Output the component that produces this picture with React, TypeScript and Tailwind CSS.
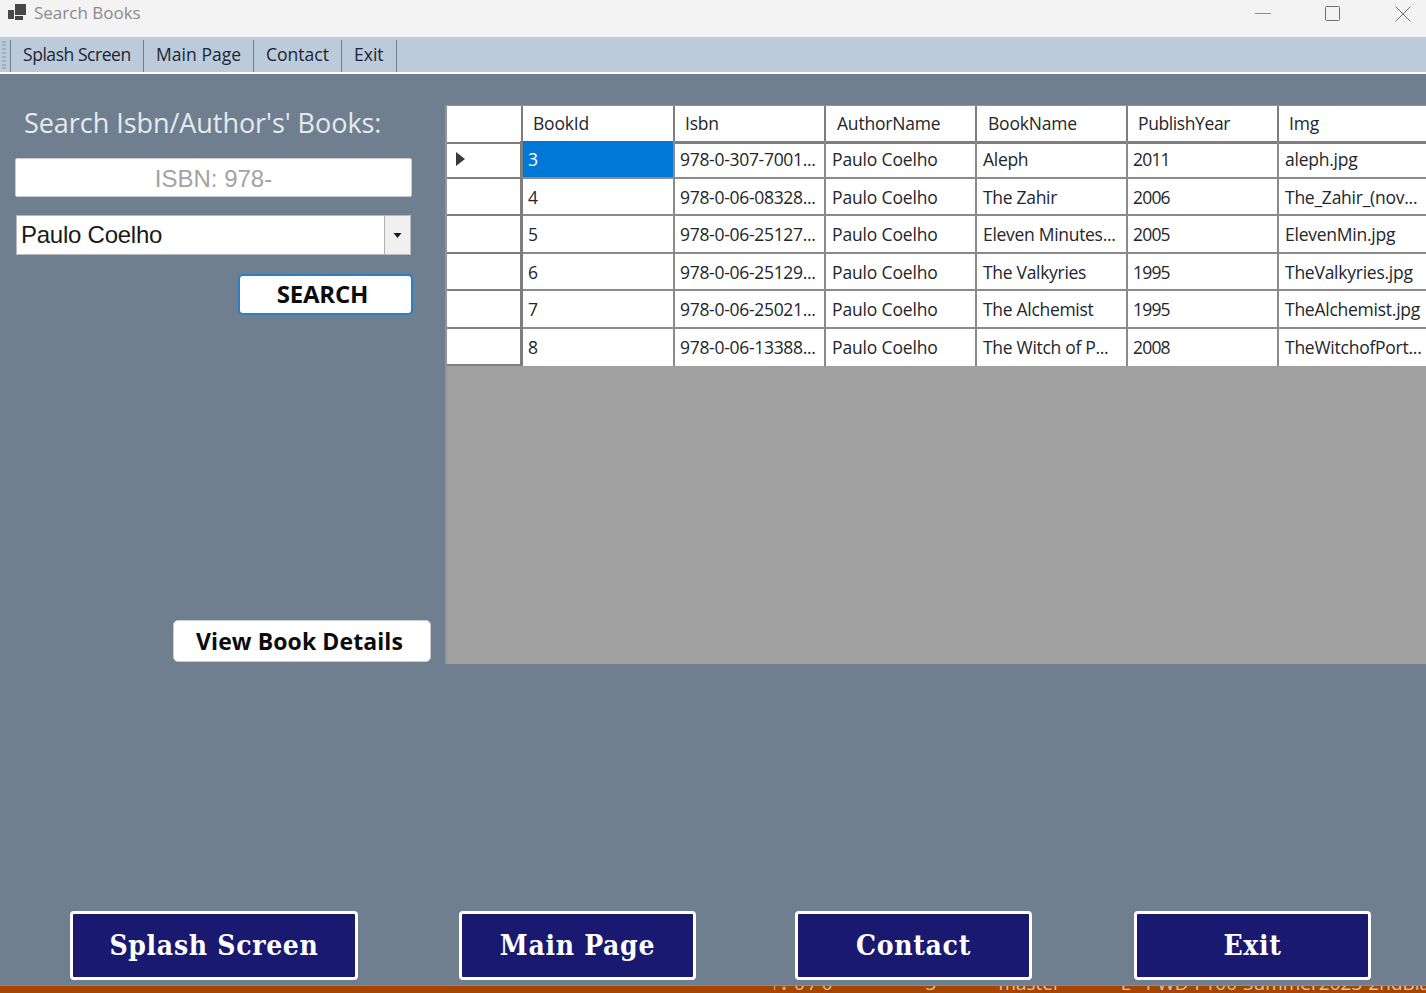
const columns = ["BookId", "Isbn", "AuthorName", "BookName", "PublishYear", "Img"];

const books = [
	["3", "978-0-307-7001...", "Paulo Coelho", "Aleph", "2011", "aleph.jpg"],
	["4", "978-0-06-08328...", "Paulo Coelho", "The Zahir", "2006", "The_Zahir_(nov..."],
	["5", "978-0-06-25127...", "Paulo Coelho", "Eleven Minutes...", "2005", "ElevenMin.jpg"],
	["6", "978-0-06-25129...", "Paulo Coelho", "The Valkyries", "1995", "TheValkyries.jpg"],
	["7", "978-0-06-25021...", "Paulo Coelho", "The Alchemist", "1995", "TheAlchemist.jpg"],
	["8", "978-0-06-13388...", "Paulo Coelho", "The Witch of P...", "2008", "TheWitchofPort..."],
];

const menuItems = [
	{ label: "Splash Screen", width: "w-[133px]", tracking: "tracking-[-0.45px]" },
	{ label: "Main Page", width: "w-[110px]", tracking: "tracking-[0.05px]" },
	{ label: "Contact", width: "w-[88px]", tracking: "tracking-[0px]" },
	{ label: "Exit", width: "w-[55px]", tracking: "tracking-[0px]" },
];

const headerClasses = [
	"pl-[10px] tracking-[-0.2px]",
	"pl-[10px] tracking-[-0.2px]",
	"pl-[11px] tracking-[-0.2px]",
	"pl-[11px] tracking-[-0.2px]",
	"pl-[10px] tracking-[-0.4px]",
	"pl-[10px] tracking-[-0.2px]",
];

const cellClasses = [
	"pl-[5px] tracking-[-0.15px]",
	"pl-[5px] tracking-[-0.3px]",
	"pl-[6px] tracking-[-0.15px]",
	"pl-[6px] tracking-[-0.3px]",
	"pl-[5px] tracking-[-0.8px]",
	"pl-[6px] tracking-[-0.25px]",
];

const TitleBar = () => {
	return (
		<div className="h-[37px] bg-[#f3f3f3] flex items-start shrink-0">
			<svg width="20" height="18" viewBox="0 0 20 18" className="ml-[7px] mt-[3px]" fill="#474747">
				<rect x="1" y="7" width="6" height="9" />
				<rect x="8" y="1" width="11" height="11" />
				<rect x="8" y="13" width="8" height="4" />
			</svg>
			<span className="ml-[7px] text-[17px] leading-[26px] text-[#8a8a8a] font-['Open_Sans',sans-serif]">Search Books</span>
			<div className="ml-auto flex items-center mt-[6px]">
				<svg width="16" height="16" viewBox="0 0 16 16" className="mr-[53px]" stroke="#8a8a8a" fill="none">
					<path d="M0 7.5H16" />
				</svg>
				<svg width="16" height="16" viewBox="0 0 16 16" className="mr-[55px]" stroke="#6f6f6f" fill="none">
					<rect x="1.5" y="0.5" width="14" height="14" rx="1" />
				</svg>
				<svg width="16" height="16" viewBox="0 0 16 16" className="mr-[15px]" stroke="#6f6f6f" fill="none">
					<path d="M0.5 0.5L15.5 15.5M15.5 0.5L0.5 15.5" />
				</svg>
			</div>
		</div>
	);
};

const MenuBar = () => {
	return (
		<div className="h-[37px] shrink-0 border-b-[2px] border-white bg-[#bccbdb] flex pl-[2px] pt-[3px] font-['Open_Sans',sans-serif]">
			<div className="w-[4px] h-[28px] mt-[1px] border-x-[2px] border-dotted border-[#9fb0c1]"></div>
			<div className="ml-[4px] h-[32px] border-l-[1.5px] border-[#6f7f8f]"></div>
			{menuItems.map((item) => (
				<div key={item.label} className={`${item.width} h-[32px] border-r-[1.5px] border-[#6f7f8f] flex items-center pl-[12px] pb-[3px] text-[17.5px] text-[#1c2530]`}>
					<span className={item.tracking}>{item.label}</span>
				</div>
			))}
		</div>
	);
};

const SearchPanel = () => {
	return (
		<div className="w-[445px] shrink-0 h-[590px] flex flex-col pl-[15px] pt-[30px]">
			<div className="ml-[9px] text-[27px] leading-[38px] text-[#e6eaee] font-['Open_Sans',sans-serif] tracking-[-0.05px]">Search Isbn/Author's' Books:</div>
			<div className="mt-[16px] w-[397px] h-[39px] rounded-[2px] bg-white border border-[#c8ccd0] flex items-center justify-center text-[24px] pt-[2px] text-[#a3a3a3] font-['Liberation_Sans',sans-serif]">
				ISBN: 978-
			</div>
			<div className="mt-[18px] ml-[1px] w-[395px] h-[40px] bg-white border border-[#b8bcc0] flex text-[24px] text-[#1a1a1a] font-['Liberation_Sans',sans-serif]">
				<span className="flex-1 pl-[4px] leading-[38px] tracking-[-0.25px]">Paulo Coelho</span>
				<div className="w-[26px] bg-[#f0f0f0] border-l border-[#b0b0b0] flex items-center justify-center">
					<svg width="9" height="5" viewBox="0 0 9 5" fill="#1a1a1a">
						<path d="M0.5 0H8.5L4.5 5Z" />
					</svg>
				</div>
			</div>
			<div className="mt-[19px] ml-[223px] w-[175px] h-[41px] rounded-[5px] bg-white border-[2px] border-[#2b80c5] flex items-center justify-center text-[24px] font-bold text-[#0c0c0c] font-['Open_Sans',sans-serif] tracking-[-0.2px] pr-[6px] pb-[2px]">
				SEARCH
			</div>
			<div className="mt-auto mb-[2px] ml-[158px] w-[258px] h-[42px] rounded-[5px] bg-white border border-[#c8ccd0] flex items-center justify-center text-[23px] font-bold text-[#0c0c0c] font-['Open_Sans',sans-serif] tracking-[0.1px] pr-[5px]">
				View Book Details
			</div>
		</div>
	);
};

const BooksGrid = () => {
	return (
		<div className="flex-1 mt-[31px] h-[559px] bg-[#a0a0a0] overflow-hidden border-l-[2px] border-t-[1px] border-[#8f9499] font-['Open_Sans',sans-serif] text-[17.5px] text-[#23262b]">
			<div className="grid grid-cols-[76px_152px_151px_151px_151px_151px_160px] h-[35px] bg-white">
				<div className="border-r-[2px] border-b-[2px] border-[#7e7e7e]"></div>
				{columns.map((name, i) => (
					<div key={name} className={`${i === 5 ? "" : "border-r-[2px]"} border-b-[3px] border-[#7e7e7e] ${headerClasses[i]} leading-[35px] whitespace-nowrap`}>
						{name}
					</div>
				))}
			</div>
			{books.map((row, r) => (
				<div key={row[0]} className={`grid grid-cols-[76px_152px_151px_151px_151px_151px_160px] ${r === 5 ? "h-[37px]" : "h-[37.5px]"} bg-white`}>
					<div className="border-r-[3px] border-b-[2px] border-[#7e7e7e] flex items-center pl-[9px]">
						{r === 0 && (
							<svg width="9" height="14" viewBox="0 0 9 14" className="mt-[1px]" fill="#3a3a3a">
								<path d="M0 0L9 7L0 14Z" />
							</svg>
						)}
					</div>
					{row.map((cell, c) => (
						<div
							key={c}
							className={`${c === 5 ? "" : "border-r-[2px]"} ${r === 5 ? "" : "border-b-[2px]"} border-[#8a8a8a] ${cellClasses[c]} leading-[37px] whitespace-nowrap overflow-hidden ${r === 0 && c === 0 ? "bg-[#0078d7] text-white" : ""}`}
						>
							{cell}
						</div>
					))}
				</div>
			))}
		</div>
	);
};

const FooterButton = ({ label, className }: { label: string; className: string }) => {
	return (
		<div className={`${className} h-[69px] rounded-[4px] bg-[#191970] border-[3px] border-white flex items-center justify-center text-[28px] tracking-[0.7px] font-bold text-white [font-stretch:condensed] font-['DejaVu_Serif',serif]`}>
			{label}
		</div>
	);
};

// what shows of the IDE status bar behind the window, only the bottom of its text
const StatusStrip = () => {
	return (
		<div className="h-[8px] shrink-0 bg-[#a64500] border-t border-[#9a8a7a] overflow-hidden">
			<div className="flex items-center -mt-[12px] h-[18px] text-[19px] leading-[18px] text-[#d9c3b2] whitespace-nowrap font-['Open_Sans',sans-serif]">
				<span className="ml-[770px]">↑↓ 0 / 0</span>
				<svg width="10" height="18" viewBox="0 0 10 18" className="ml-[68px]" fill="#e6d8cc">
					<path d="M9 12L2 18L1 15Z" />
				</svg>
				<span className="ml-[25px]">3</span>
				<svg width="8" height="18" viewBox="0 0 8 18" className="ml-[31px]" fill="none" stroke="#e6d8cc" strokeWidth="1.5">
					<circle cx="4" cy="15" r="3" />
				</svg>
				<span className="ml-[31px]">master</span>
				<span className="ml-[60px]">L</span>
				<svg width="12" height="18" viewBox="0 0 12 18" fill="#e6d8cc">
					<circle cx="6" cy="14" r="5.5" />
					<path d="M3.5 12H8.5L6 16Z" fill="#2a2a2a" />
				</svg>
				<span className="ml-[15px]">PWD-F100-Summer2023-2ndBlank</span>
			</div>
		</div>
	);
};

const App = () => {
	return (
		<div className="w-[1426px] h-[993px] overflow-hidden flex flex-col bg-[#6f7f8f]">
			<TitleBar />
			<MenuBar />
			<div className="flex flex-1 min-h-0 items-start">
				<SearchPanel />
				<BooksGrid />
			</div>
			<div className="flex shrink-0 pl-[70px] mb-[5px]">
				<FooterButton label="Splash Screen" className="w-[288px]" />
				<FooterButton label="Main Page" className="w-[237px] ml-[101px]" />
				<FooterButton label="Contact" className="w-[237px] ml-[99px]" />
				<FooterButton label="Exit" className="w-[237px] ml-[102px]" />
			</div>
			<StatusStrip />
		</div>
	);
};

export default App;
